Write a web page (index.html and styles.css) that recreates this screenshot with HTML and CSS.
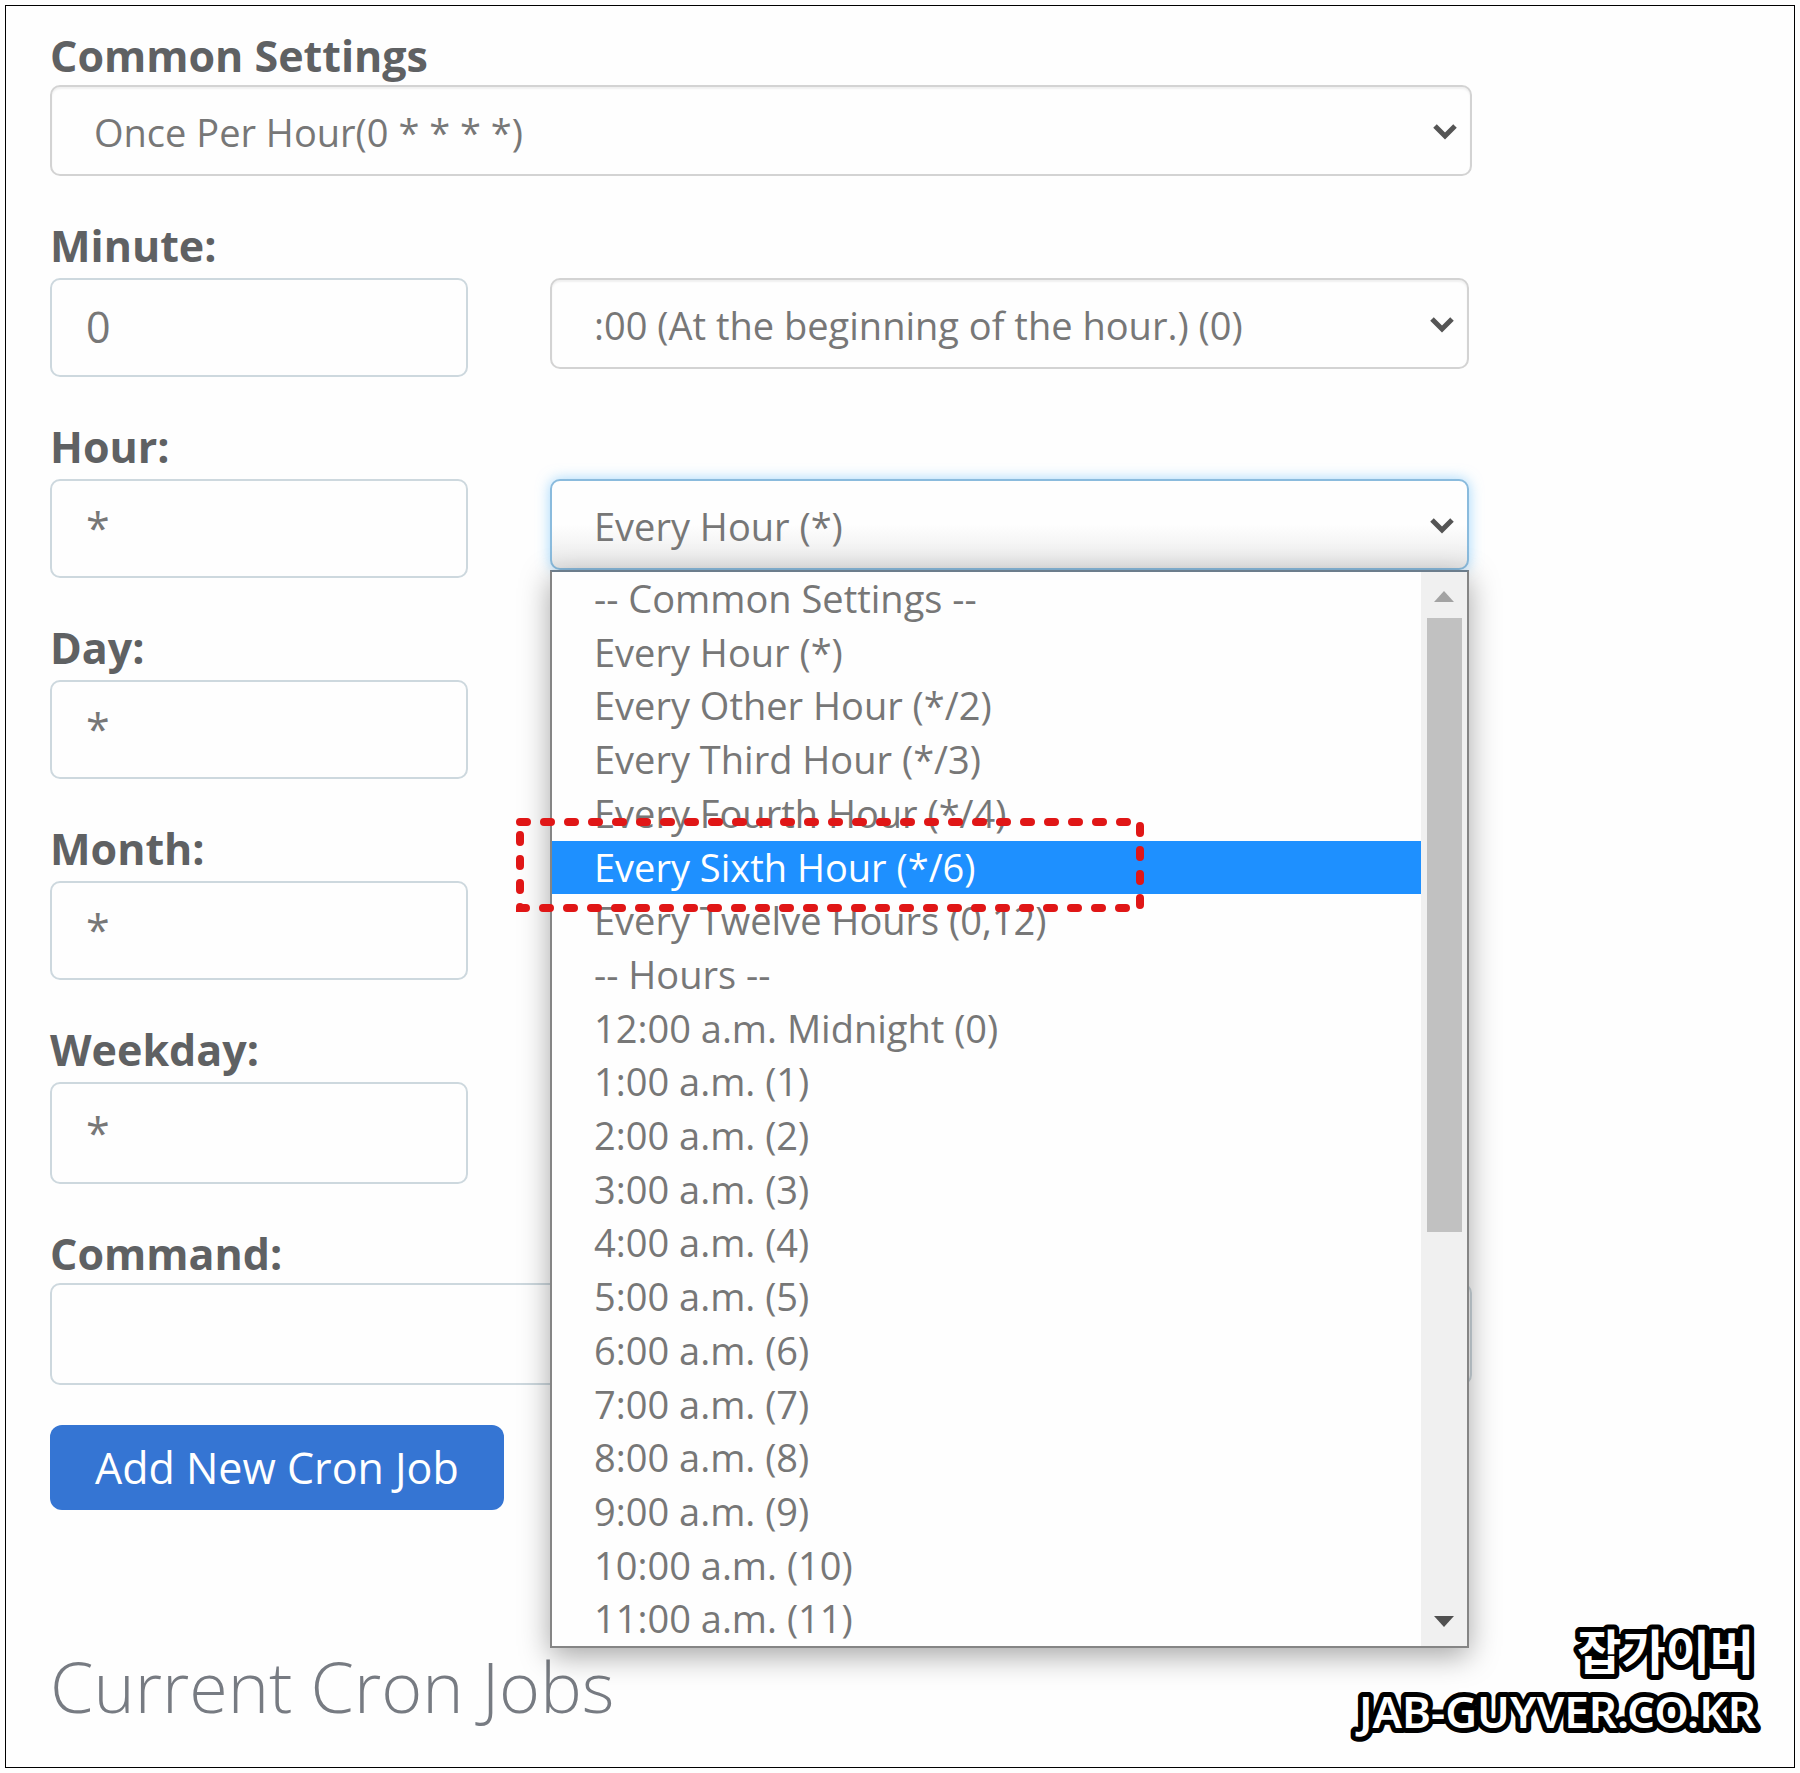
FILE: index.html
```html
<!DOCTYPE html>
<html lang="en">
<head>
    <meta charset="UTF-8">
    <meta name="viewport" content="width=device-width, initial-scale=1.0">
    <title>Cron Jobs</title>
    <link rel="stylesheet" href="styles.css">
</head>
<body>
    <main class="frame">
        <form class="cron-form">
            <div class="field compact">
                <label for="common">Common Settings</label>
                <div class="select-box">
                    <select id="common">
                        <option>Once Per Hour(0 * * * *)</option>
                    </select>
                    <svg class="chevron" viewBox="0 0 26 18"><path d="M3 3l10 10L23 3"/></svg>
                </div>
            </div>

            <div class="field">
                <label for="minute">Minute:</label>
                <div class="field-row">
                    <input type="text" id="minute" value="0">
                    <div class="select-box">
                        <select aria-label="Minute options">
                            <option>:00 (At the beginning of the hour.) (0)</option>
                        </select>
                        <svg class="chevron" viewBox="0 0 26 18"><path d="M3 3l10 10L23 3"/></svg>
                    </div>
                </div>
            </div>

            <div class="field">
                <label for="hour">Hour:</label>
                <div class="field-row">
                    <input type="text" id="hour" value="*">
                    <div class="select-box open">
                        <select aria-label="Hour options">
                            <option>Every Hour (*)</option>
                        </select>
                        <svg class="chevron" viewBox="0 0 26 18"><path d="M3 3l10 10L23 3"/></svg>

                        <div class="dropdown">
                            <ul class="options" role="listbox" aria-label="Hour options">
                                <li role="option">-- Common Settings --</li>
                                <li role="option">Every Hour (*)</li>
                                <li role="option">Every Other Hour (*/2)</li>
                                <li role="option">Every Third Hour (*/3)</li>
                                <li role="option">Every Fourth Hour (*/4)</li>
                                <li role="option" class="active" aria-selected="true">Every Sixth Hour (*/6)</li>
                                <li role="option">Every Twelve Hours (0,12)</li>
                                <li role="option">-- Hours --</li>
                                <li role="option">12:00 a.m. Midnight (0)</li>
                                <li role="option">1:00 a.m. (1)</li>
                                <li role="option">2:00 a.m. (2)</li>
                                <li role="option">3:00 a.m. (3)</li>
                                <li role="option">4:00 a.m. (4)</li>
                                <li role="option">5:00 a.m. (5)</li>
                                <li role="option">6:00 a.m. (6)</li>
                                <li role="option">7:00 a.m. (7)</li>
                                <li role="option">8:00 a.m. (8)</li>
                                <li role="option">9:00 a.m. (9)</li>
                                <li role="option">10:00 a.m. (10)</li>
                                <li role="option">11:00 a.m. (11)</li>
                            </ul>
                            <div class="scrollbar">
                                <svg class="arrow arrow-up" viewBox="0 0 20 11"><path d="M0 11L10 0l10 11z"/></svg>
                                <div class="thumb"></div>
                                <svg class="arrow arrow-down" viewBox="0 0 20 11"><path d="M0 0h20L10 11z"/></svg>
                            </div>
                            <svg class="marker" viewBox="0 0 630 96"><rect x="5" y="5" width="620" height="86"/></svg>
                        </div>
                    </div>
                </div>
            </div>

            <div class="field">
                <label for="day">Day:</label>
                <div class="field-row">
                    <input type="text" id="day" value="*">
                </div>
            </div>

            <div class="field">
                <label for="month">Month:</label>
                <div class="field-row">
                    <input type="text" id="month" value="*">
                </div>
            </div>

            <div class="field">
                <label for="weekday">Weekday:</label>
                <div class="field-row">
                    <input type="text" id="weekday" class="tall" value="*">
                </div>
            </div>

            <div class="field compact">
                <label for="command">Command:</label>
                <input type="text" id="command" class="tall">
            </div>

            <button type="button" class="btn">Add New Cron Job</button>
        </form>

        <h2>Current Cron Jobs</h2>

        <svg class="watermark" viewBox="0 0 430 140">
            <text class="ko" lang="ko" x="424" y="63">잡가이버</text>
            <text x="426" y="121">JAB-GUYVER.CO.KR</text>
        </svg>
    </main>
</body>
</html>
```
FILE: styles.css
```css
* {
    box-sizing: border-box;
}

body {
    margin: 0;
    padding: 5px;
    background-color: #fefefe;
    color: #666;
    font-family: "Open Sans", "Noto Sans", sans-serif;
}

.frame {
    position: relative;
    min-height: calc(100vh - 10px);
    padding: 25px 322px 20px 44px;
    border: 1px solid #000;
}

.cron-form {
    display: flex;
    flex-direction: column;
    align-items: flex-start;
}

.field {
    display: flex;
    flex-direction: column;
    gap: 7px;
    width: 100%;
    margin-bottom: 45px;
}

.compact {
    gap: 4px;
}

label {
    font-size: 43px;
    font-weight: bold;
    line-height: 50px;
    color: #5f6163;
}

.field-row {
    display: grid;
    grid-template-columns: 418px 1fr;
    gap: 82px;
    align-items: start;
    padding-right: 3px;
}

input {
    width: 100%;
    height: 99px;
    padding: 0 34px 2px;
    border: 2px solid #cdd8de;
    border-radius: 10px;
    background-color: #fefefe;
    color: #777;
    font-family: inherit;
    font-size: 43px;
}

.tall {
    height: 102px;
}

.select-box {
    position: relative;
}

select {
    appearance: none;
    display: block;
    width: 100%;
    height: 91px;
    padding: 2px 60px 0 42px;
    border: 2px solid #d3d3d3;
    border-radius: 10px;
    background-color: #fefefe;
    box-shadow: inset 0 2px 2px rgba(0, 0, 0, 0.06);
    color: #777;
    font-family: inherit;
    font-size: 38px;
}

.chevron {
    position: absolute;
    top: 38px;
    right: 14px;
    width: 26px;
    height: 18px;
    fill: none;
    stroke: #555;
    stroke-width: 5;
}

.open select {
    border-color: #8abbdd;
    background-image: linear-gradient(#fefefe 50%, #e9e9e9);
    box-shadow: 0 0 14px rgba(102, 190, 250, 0.6);
}

/* open list */
.dropdown {
    position: absolute;
    z-index: 2;
    top: 91px;
    left: 0;
    right: 0;
    display: flex;
    height: 1078px;
    border: 2px solid #858585;
    border-top-color: #6c7d8c;
    background-color: #fefefe;
    box-shadow: 0 8px 28px rgba(0, 0, 0, 0.35);
}

.options {
    display: flex;
    flex-direction: column;
    flex: 1;
    margin: 0;
    padding: 0;
    list-style: none;
    font-size: 38px;
    line-height: 52px;
    color: #777;
}

.options li {
    flex: 1;
    padding-left: 42px;
}

.options .active {
    background-color: #1e90ff;
    color: #fff;
}

.scrollbar {
    display: flex;
    flex-direction: column;
    align-items: center;
    width: 46px;
    padding: 19px 0;
    background-color: #f0f0f0;
}

.arrow {
    width: 20px;
    height: 11px;
}

.arrow-up {
    fill: #a3a3a3;
}

.arrow-down {
    margin-top: auto;
    fill: #505050;
}

.thumb {
    width: 35px;
    height: 614px;
    margin-top: 16px;
    background-color: #c1c1c1;
}

.marker {
    position: absolute;
    top: 245px;
    left: -37px;
    width: 630px;
    height: 96px;
    fill: none;
    stroke: #e01616;
    stroke-width: 8;
    stroke-linecap: round;
    stroke-dasharray: 7 17;
}

.btn {
    height: 85px;
    margin-top: -5px;
    padding: 0 45px;
    border: none;
    border-radius: 12px;
    background-color: #3575d3;
    color: #fff;
    font-family: inherit;
    font-size: 43px;
    cursor: pointer;
}

h2 {
    margin: 136px 0 0;
    font-size: 70px;
    font-weight: 300;
    line-height: 80px;
    color: #777b82;
}

.watermark {
    position: absolute;
    right: 34px;
    bottom: 20px;
    width: 430px;
    height: 140px;
    overflow: visible;
    fill: #fff;
    stroke: #000;
    stroke-width: 10;
    stroke-linejoin: round;
    paint-order: stroke;
    text-anchor: end;
    font-family: "Noto Sans", "Noto Sans CJK KR", sans-serif;
    font-size: 44px;
    font-weight: 600;
}

.watermark .ko {
    font-size: 48px;
}
```
